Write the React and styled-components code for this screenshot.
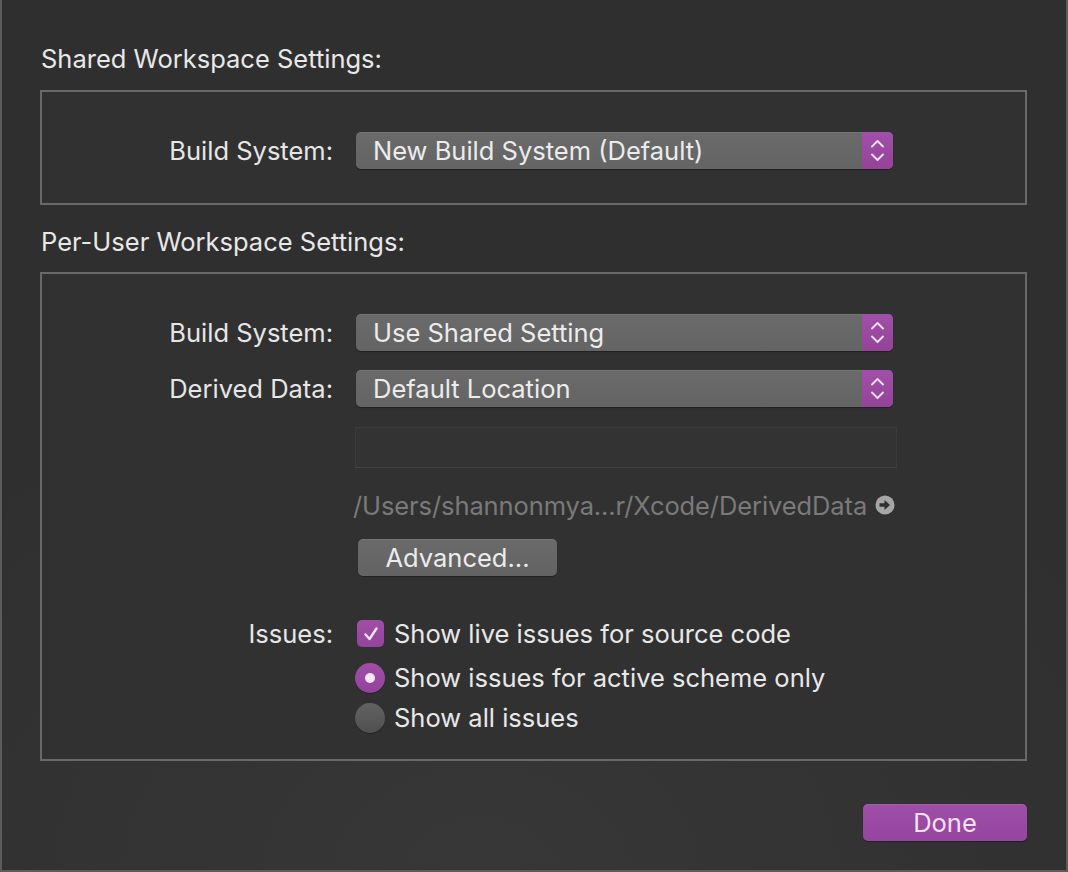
import React from 'react';
import styled, { createGlobalStyle } from 'styled-components';

const GlobalStyle = createGlobalStyle`
  html, body {
    margin: 0;
    padding: 0;
    background: #2f2f2f;
  }
  body {
    font-family: Inter, "Liberation Sans", Arial, sans-serif;
    -webkit-font-smoothing: antialiased;
  }
`;

const FONT = '25.5px';

const Window = styled.div`
  box-sizing: border-box;
  width: 1068px;
  height: 872px;
  border: 2px solid #5c5c5c;
  border-top: none;
  padding: 0 39px 0 38px;
  background: radial-gradient(ellipse 70% 60% at 45% 100%, #373737 0%, #2f2f2f 100%);
  color: #e6e6e6;
  display: flex;
  flex-direction: column;
`;

const SectionTitle = styled.div`
  font-size: ${FONT};
  line-height: 32px;
  height: 32px;
  padding-left: 1px;
  margin-top: ${(p) => p.$mt}px;
  margin-bottom: ${(p) => p.$mb}px;
  color: #e8e8e8;
`;

const GroupBox = styled.div`
  border: 2px solid #696969;
  background: #313131;
  padding: ${(p) => p.$pt}px 0 ${(p) => p.$pb}px 0;
  display: flex;
  flex-direction: column;
`;

const Row = styled.div`
  display: grid;
  grid-template-columns: 291px 1fr;
  column-gap: 22px;
  align-items: center;
  margin-top: ${(p) => p.$mt || 0}px;
  height: ${(p) => p.$h}px;
`;

const Label = styled.div`
  text-align: right;
  font-size: ${FONT};
  color: #e6e6e6;
  white-space: nowrap;
`;

const Cell = styled.div`
  display: flex;
  align-items: center;
  margin-left: ${(p) => p.$ml || 0}px;
`;

const Popup = styled.div`
  box-sizing: border-box;
  width: 537px;
  height: 37px;
  margin-left: 1px;
  border-radius: 5px;
  background: linear-gradient(#6a6a6a, #646464);
  box-shadow: 0 1px 1px rgba(0, 0, 0, 0.35), inset 0 1px 0 rgba(255, 255, 255, 0.08);
  display: flex;
  align-items: center;
  overflow: hidden;
`;

const PopupText = styled.span`
  flex: 1;
  padding-left: 17px;
  font-size: ${FONT};
  color: #ececec;
  white-space: nowrap;
`;

const Stepper = styled.div`
  width: 31px;
  height: 100%;
  background: linear-gradient(#a050a8, #954399);
  display: flex;
  align-items: center;
  justify-content: center;
`;

const TextField = styled.div`
  box-sizing: border-box;
  width: 542px;
  height: 41px;
  border: 1px solid #3b3b3b;
  border-bottom-color: #444;
  background: #333333;
`;

const PathText = styled.span`
  font-size: ${FONT};
  letter-spacing: -0.1px;
  color: #7a7a7a;
  white-space: nowrap;
  margin-left: -2px;
`;

const GoIcon = styled.svg`
  margin-left: 8px;
  flex: none;
`;

const PushButton = styled.button`
  box-sizing: border-box;
  width: ${(p) => p.$w}px;
  height: 37px;
  border: none;
  border-radius: 5px;
  font-family: inherit;
  font-size: ${FONT};
  padding: 0;
  color: ${(p) => (p.$primary ? '#f6e2f6' : '#ececec')};
  background: ${(p) =>
    p.$primary ? 'linear-gradient(#9f4fa6, #9545a0)' : 'linear-gradient(#6a6a6a, #636363)'};
  box-shadow: 0 1px 1px rgba(0, 0, 0, 0.35), inset 0 1px 0 rgba(255, 255, 255, 0.08);
`;

const Option = styled.label`
  display: flex;
  align-items: center;
  font-size: ${FONT};
  color: #e8e8e8;
  white-space: nowrap;
  gap: ${(p) => p.$gap}px;
`;

const CheckBox = styled.span`
  width: 27px;
  height: 27px;
  margin-left: 2px;
  border-radius: 5px;
  background: linear-gradient(#a04ea8, #94449c);
  display: flex;
  align-items: center;
  justify-content: center;
`;

const Radio = styled.span`
  width: 30px;
  height: 30px;
  border-radius: 50%;
  background: ${(p) =>
    p.$on ? 'linear-gradient(#a04ea8, #93439b)' : 'linear-gradient(#626262, #505050)'};
  box-shadow: 0 1px 1px rgba(0, 0, 0, 0.3);
  display: flex;
  align-items: center;
  justify-content: center;
  &::after {
    content: '';
    display: ${(p) => (p.$on ? 'block' : 'none')};
    width: 10px;
    height: 10px;
    border-radius: 50%;
    background: #f4e6f4;
  }
`;

const Footer = styled.div`
  display: flex;
  justify-content: flex-end;
  margin-top: 43px;
`;

const Chevrons = () => (
  <svg width="15" height="27" viewBox="0 0 15 27">
    <path d="M2 9.5 L7.5 4 L13 9.5" fill="none" stroke="#f3e0f3" strokeWidth="1.9" strokeLinecap="round" strokeLinejoin="round" />
    <path d="M2 17.5 L7.5 23 L13 17.5" fill="none" stroke="#f3e0f3" strokeWidth="1.9" strokeLinecap="round" strokeLinejoin="round" />
  </svg>
);

const PopupButton = ({ children }) => (
  <Popup>
    <PopupText>{children}</PopupText>
    <Stepper>
      <Chevrons />
    </Stepper>
  </Popup>
);

export default function App() {
  return (
    <>
      <GlobalStyle />
      <Window>
        <SectionTitle $mt={43} $mb={15}>Shared Workspace Settings:</SectionTitle>
        <GroupBox $pt={40} $pb={34}>
          <Row $h={37}>
            <Label>Build System:</Label>
            <Cell>
              <PopupButton>New Build System (Default)</PopupButton>
            </Cell>
          </Row>
        </GroupBox>

        <SectionTitle $mt={21} $mb={14}>Per-User Workspace Settings:</SectionTitle>
        <GroupBox $pt={40} $pb={27}>
          <Row $h={37}>
            <Label>Build System:</Label>
            <Cell>
              <PopupButton>Use Shared Setting</PopupButton>
            </Cell>
          </Row>
          <Row $h={37} $mt={19}>
            <Label>Derived Data:</Label>
            <Cell>
              <PopupButton>Default Location</PopupButton>
            </Cell>
          </Row>
          <Row $h={41} $mt={20}>
            <span />
            <Cell>
              <TextField />
            </Cell>
          </Row>
          <Row $h={36} $mt={19}>
            <span />
            <Cell>
              <PathText>/Users/shannonmya...r/Xcode/DerivedData</PathText>
              <GoIcon width="20" height="20" viewBox="0 0 20 20">
                <circle cx="10" cy="10" r="9.5" fill="#a6a6a6" />
                <path d="M4.5 8.2 H9.5 V5 L15 10 L9.5 15 V11.8 H4.5 Z" fill="#2f2f2f" />
              </GoIcon>
            </Cell>
          </Row>
          <Row $h={37} $mt={16}>
            <span />
            <Cell $ml={3}>
              <PushButton $w={199}>Advanced...</PushButton>
            </Cell>
          </Row>
          <Row $h={30} $mt={42}>
            <Label>Issues:</Label>
            <Cell>
              <Option $gap={10}>
                <CheckBox>
                  <svg width="18" height="18" viewBox="0 0 18 18">
                    <path d="M3.5 9.5 L7.5 14 L14.5 3.5" fill="none" stroke="#f6e8f6" strokeWidth="2.4" strokeLinecap="round" strokeLinejoin="round" />
                  </svg>
                </CheckBox>
                Show live issues for source code
              </Option>
            </Cell>
          </Row>
          <Row $h={30} $mt={14}>
            <span />
            <Cell>
              <Option $gap={9}>
                <Radio $on />
                Show issues for active scheme only
              </Option>
            </Cell>
          </Row>
          <Row $h={30} $mt={10}>
            <span />
            <Cell>
              <Option $gap={9}>
                <Radio />
                Show all issues
              </Option>
            </Cell>
          </Row>
        </GroupBox>

        <Footer>
          <PushButton $primary $w={164}>Done</PushButton>
        </Footer>
      </Window>
    </>
  );
}
